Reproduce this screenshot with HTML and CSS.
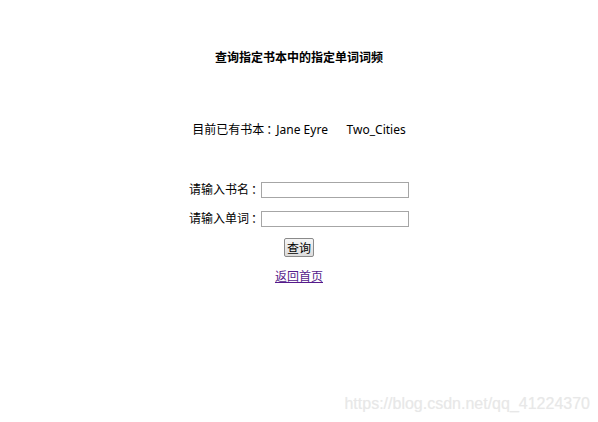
FILE: index.html
```html
<!DOCTYPE html>
<html lang="zh">
<head>
<meta charset="utf-8">
<title>查询指定书本中的指定单词词频</title>
<link rel="stylesheet" href="styles.css">
</head>
<body>
<div class="page">
  <h1 class="title">查询指定书本中的指定单词词频</h1>
  <p class="books">目前已有书本<span class="colon">：</span>Jane Eyre&nbsp;&nbsp;&nbsp;&nbsp;&nbsp;&nbsp;Two_Cities</p>
  <form class="form">
    <div class="row"><label class="label">请输入书名<span class="colon">：</span></label><input class="field" type="text"></div>
    <div class="row"><label class="label">请输入单词<span class="colon">：</span></label><input class="field" type="text"></div>
    <div class="row"><button class="btn" type="button">查询</button></div>
    <div class="row"><a class="link" href="#">返回首页</a></div>
  </form>
</div>
<div class="watermark">https://blog.csdn.net/qq_41224370</div>
</body>
</html>
```

FILE: styles.css
```css
html, body {
  margin: 0;
  padding: 0;
  background: #fff;
}
body {
  width: 598px;
  height: 422px;
  position: relative;
  overflow: hidden;
  font-family: "Noto Sans", "Noto Sans CJK SC", sans-serif;
  font-size: 12px;
  color: #000;
}
.page {
  display: flex;
  flex-direction: column;
  align-items: center;
  padding-top: 50px;
}
.title {
  margin: 0;
  font-size: 12px;
  line-height: 16px;
  font-weight: bold;
}
.books {
  margin: 56px 0 0 0;
  line-height: 16px;
  height: 16px;
}
.colon {
  padding-left: 2px;
  letter-spacing: -2px;
}
.form {
  margin-top: 37px;
  display: flex;
  flex-direction: column;
  align-items: center;
}
.row {
  height: 29px;
  display: flex;
  align-items: center;
  justify-content: center;
}
.label {
  font-size: 12px;
  line-height: 16px;
  height: 16px;
}
.field {
  box-sizing: border-box;
  width: 148px;
  height: 16px;
  margin: 0;
  padding: 0 2px;
  border: 1px solid #a6a6a6;
  background: #fff;
  font-size: 12px;
}
.btn {
  box-sizing: border-box;
  width: 30px;
  height: 19px;
  padding: 0;
  border: 1px solid #8a8a8a;
  border-radius: 2px;
  background: linear-gradient(#f6f6f6, #dcdcdc);
  font-family: "Noto Sans CJK SC", sans-serif;
  font-size: 12px;
  line-height: 16px;
  color: #000;
}
.link {
  color: #551a8b;
  text-decoration: underline;
  line-height: 16px;
}
.watermark {
  position: absolute;
  right: 8px;
  bottom: 9px;
  font-family: "Liberation Sans", Arial, sans-serif;
  font-size: 16px;
  color: #e8e8e8;
  text-shadow: 0 0 1px #f2f2f2;
}
```
